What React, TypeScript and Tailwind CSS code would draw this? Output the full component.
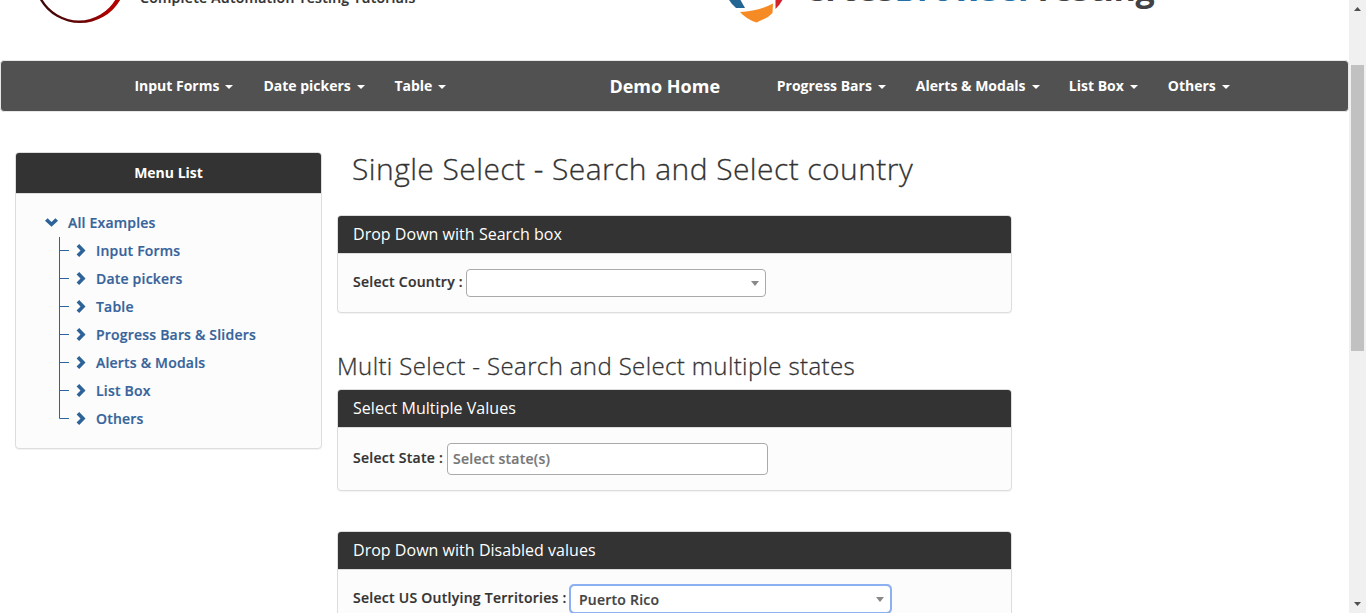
import type { ReactNode } from "react";

function NavItem({ label, width }: { label: string; width: string }) {
  return (
    <a className={`flex shrink-0 items-center whitespace-nowrap text-[14px] leading-5 font-bold text-white ${width}`}>
      {label}
      <svg className="mt-[2px] ml-[6px]" width="8" height="4" viewBox="0 0 8 4">
        <path d="M0 0h8L4 4z" fill="#fff" />
      </svg>
    </a>
  );
}

function Chevron({ down = false }: { down?: boolean }) {
  return down ? (
    <svg className="mb-[2px] shrink-0" width="13" height="9" viewBox="0 0 13 9">
      <path d="M2.6 .2L6.5 3.9 10.4 .2 13 2.8 6.5 8.8 0 2.8z" fill="#2e6399" />
    </svg>
  ) : (
    <svg className="shrink-0" width="10" height="13" viewBox="0 0 10 13">
      <path d="M.6 2.6L4.5 6.5 .6 10.4 3.2 13 9.5 6.5 3.2 0z" fill="#2e6399" />
    </svg>
  );
}

function Arrow() {
  return (
    <svg width="8" height="5" viewBox="0 0 8 5">
      <path d="M0 0h8L4 5z" fill="#888" />
    </svg>
  );
}

function Panel({ title, className, children }: { title: string; className: string; children: ReactNode }) {
  return (
    <section className={`w-[675px] shrink-0 overflow-hidden rounded border border-[#ddd] bg-[#fcfcfc] shadow-[0_1px_1px_rgba(0,0,0,0.05)] ${className}`}>
      <h4 className="h-[38px] border-b border-[#ddd] bg-[#333] pl-[15px] text-[16px] leading-[36px] font-normal tracking-[0.03px] text-white">{title}</h4>
      {children}
    </section>
  );
}

const strong = "text-[14px] font-semibold [-webkit-text-stroke:0.2px_currentColor]";
const label = `shrink-0 whitespace-nowrap leading-5 tracking-[0.27px] text-[#333] ${strong}`;
const heading = "font-light whitespace-nowrap [-webkit-text-stroke:0.3px_currentColor]";
const examples = ["Input Forms", "Date pickers", "Table", "Progress Bars & Sliders", "Alerts & Modals", "List Box", "Others"];

function Header() {
  return (
    <header className="flex h-[60px] shrink-0 items-start overflow-hidden">
      <svg className="-mt-[70px] ml-[34px] shrink-0" width="93" height="93" viewBox="0 0 93 93">
        <defs>
          <linearGradient id="ring">
            <stop offset=".1" stopColor="#3d0808" />
            <stop offset=".5" stopColor="#650505" />
            <stop offset=".8" stopColor="#b00000" />
          </linearGradient>
        </defs>
        <path fillRule="evenodd" d="M46 0a46.5 46.5 0 1 0 .1 0zM45 2a43 44.2 0 1 1-.1 0z" fill="url(#ring)" />
      </svg>
      <p className={`-mt-[12px] ml-[13px] w-[588px] shrink-0 leading-5 tracking-[0.28px] text-[#333] ${strong}`}>
        Complete Automation Testing Tutorials
      </p>
      <svg className="shrink-0" width="58" height="24" viewBox="0 0 58 24">
        <path d="M0-2h11.4L17 8H8Q3 4 0-2z" fill="#246593" />
        <path d="M12 12Q31 11 45 3.5L44.5 13 40 17 28.5 22.6Q18 19 12 12z" fill="#f68b25" />
        <path d="M47.5-2h8Q52 5 47.5 9z" fill="#d2232a" />
      </svg>
      <p className="-mt-[34px] ml-[18px] whitespace-nowrap text-[34px] leading-[44px] font-bold tracking-[-0.3px] text-[#424143]">
        Cross<span className="text-[#246fa8]">Browser</span>Testing
      </p>
    </header>
  );
}

export default function App() {
  return (
    <div className="flex h-[613px] w-[1366px] overflow-hidden bg-white font-['Open_Sans',sans-serif] text-[#333]">
      <div className="flex w-[1349px] shrink-0 flex-col">
        <Header />
        <nav className="flex h-[52px] shrink-0 items-center rounded border border-[#e7e7e7] bg-[#515151] pl-[133.4px]">
          <NavItem label="Input Forms" width="w-[129px]" />
          <NavItem label="Date pickers" width="w-[131px]" />
          <NavItem label="Table" width="w-[215px]" />
          <a className="w-[167.4px] shrink-0 text-[18px] leading-5 font-bold whitespace-nowrap text-white">Demo Home</a>
          <NavItem label="Progress Bars" width="w-[139px]" />
          <NavItem label="Alerts & Modals" width="w-[153px]" />
          <NavItem label="List Box" width="w-[99px]" />
          <NavItem label="Others" width="w-[80px]" />
        </nav>
        <div className="flex pl-[15px]">
          <aside className="mt-10 h-[297px] w-[307px] shrink-0 overflow-hidden rounded border border-[#ddd] bg-[#fcfcfc] shadow-[0_1px_1px_rgba(0,0,0,0.05)]">
            <h3 className="h-[41px] border-b border-[#ddd] bg-[#333] text-center text-[14px] leading-10 font-bold text-white">Menu List</h3>
            <div className={`mt-[15px] ml-[29px] flex h-7 items-center tracking-[0.2px] text-[#36639a] ${strong}`}>
              <Chevron down />
              <span className="mb-[2px] ml-[10px]">All Examples</span>
            </div>
            <ul className={`ml-[43px] tracking-[0.2px] text-[#36639a] ${strong}`}>
              {examples.map((name, i) => (
                <li key={name} className="flex h-7 items-center">
                  <svg className="shrink-0" width="10" height="28" viewBox="0 0 10 28">
                    <path d={i === 6 ? "M.5 0V13.5H10" : "M.5 0V28M.5 13.5H10"} fill="none" stroke="#2e6399" />
                  </svg>
                  <span className="mb-px ml-[7px] flex w-[20px]"><Chevron /></span>
                  <span className="mb-[2px]">{name}</span>
                </li>
              ))}
            </ul>
          </aside>
          <main className="ml-[15px] flex flex-col">
            <h2 className={`mt-[37px] ml-[15px] h-[66px] text-[30px] leading-10 tracking-[0.43px] ${heading}`}>Single Select - Search and Select country</h2>
            <Panel title="Drop Down with Search box" className="h-[98px]">
              <div className="mt-[15px] flex pl-[15px]">
                <label className={`mt-[3px] w-[113px] ${label}`}>Select Country :</label>
                <div className="flex h-7 w-[300px] items-center justify-end rounded border border-[#aaa] bg-white pr-[6px]"><Arrow /></div>
              </div>
            </Panel>
            <h3 className={`mt-[35px] h-[41px] text-[24px] leading-9 tracking-[0.37px] ${heading}`}>Multi Select - Search and Select multiple states</h3>
            <Panel title="Select Multiple Values" className="h-[102px]">
              <div className="mt-[15px] flex pl-[15px]">
                <label className={`mt-[5px] w-[94px] ${label}`}>Select State :</label>
                <div className={`flex h-8 w-[321px] items-center rounded border border-[#aaa] bg-white pb-[2px] pl-[5px] tracking-[0.24px] text-[#777] ${strong}`}>Select state(s)</div>
              </div>
            </Panel>
            <Panel title="Drop Down with Disabled values" className="mt-10 h-[102px]">
              <div className="mt-[15px] flex pl-[15px]">
                <label className={`mt-[3px] w-[217px] ${label}`}>Select US Outlying Territories :</label>
                <div className={`flex h-7 w-[321px] items-center justify-between rounded border border-[#aaa] bg-white pr-[6px] pl-2 tracking-[0.24px] text-[#444] outline-2 -outline-offset-1 outline-[#8cb0f2] ${strong}`}>
                  <span>Puerto Rico</span><Arrow />
                </div>
              </div>
            </Panel>
          </main>
        </div>
      </div>
      <div className="flex w-[17px] shrink-0 flex-col items-center bg-[#f0f0f0]">
        <svg className="mt-[7px]" width="7" height="4" viewBox="0 0 7 4"><path d="M3.5 0L7 4H0z" fill="#505050" /></svg>
        <div className="mt-[54px] h-[286px] w-[13px] bg-[#c1c1c1]" />
        <svg className="mt-[251px]" width="7" height="4" viewBox="0 0 7 4"><path d="M0 0h7L3.5 4z" fill="#505050" /></svg>
      </div>
    </div>
  );
}
